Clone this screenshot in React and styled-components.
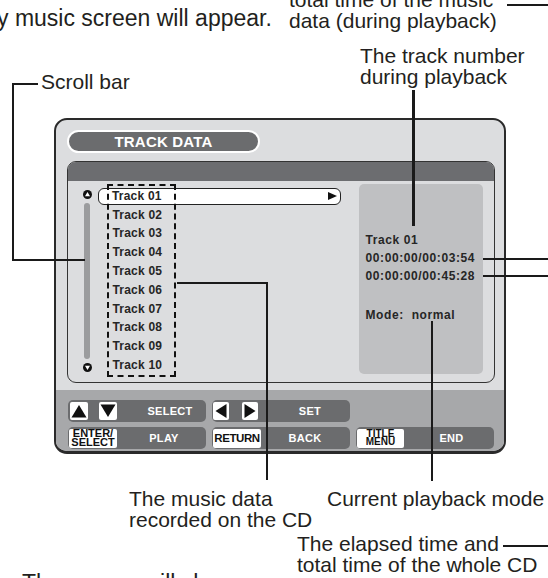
import React from 'react';
import styled, { createGlobalStyle } from 'styled-components';

const GlobalStyle = createGlobalStyle`
  html, body {
    margin: 0;
    padding: 0;
    background: #fff;
  }
  body {
    font-family: "Liberation Sans", Arial, sans-serif;
  }
`;

const Page = styled.div`
  position: relative;
  width: 548px;
  height: 578px;
  box-sizing: border-box;
  padding: 118px 0 0 54px;
  overflow: hidden;
  background: #fff;
`;

// ---- the TV screen ----

const Screen = styled.div`
  width: 452px;
  height: 336px;
  box-sizing: border-box;
  border: 2px solid #2a2a2a;
  border-bottom-width: 3px;
  border-radius: 13px;
  background: #dcdddf;
  overflow: hidden;
  display: flex;
  flex-direction: column;
`;

const ScreenTop = styled.div`
  padding: 10px 9px 0 11px;
`;

const TitlePill = styled.div`
  width: 193px;
  height: 23px;
  box-sizing: border-box;
  border: 2px solid #fff;
  border-radius: 12px;
  background: #6b6c6e;
  color: #fff;
  font: bold 15px/19px "Liberation Sans", Arial, sans-serif;
  letter-spacing: 0.2px;
  text-align: center;
  margin-bottom: 8px;
`;

const ListPanel = styled.div`
  height: 222px;
  box-sizing: border-box;
  border: 1.5px solid #333;
  border-radius: 9px;
  background: #dcdddf;
  overflow: hidden;
  display: flex;
  flex-direction: column;
`;

const PanelHeader = styled.div`
  flex: none;
  height: 18.5px;
  background: #6c6d70;
`;

const PanelBody = styled.div`
  flex: 1;
  display: flex;
  padding: 3px 10px 8.5px 14.5px;
`;

const ScrollCol = styled.div`
  width: 9px;
  display: flex;
  flex-direction: column;
  align-items: center;
  gap: 4px;
  padding: 6px 0 2.5px;
`;

const ScrollTrack = styled.div`
  flex: 1;
  width: 5.5px;
  border-radius: 3px;
  background: #9b9c9e;
`;

const ListCol = styled.div`
  position: relative;
  width: 243px;
  margin-left: 6px;
  padding-top: 3px;
`;

const TrackRow = styled.div`
  display: flex;
  align-items: center;
  box-sizing: border-box;
  height: ${p => (p.$selected ? '17px' : '18.8px')};
  margin: ${p => (p.$selected ? '1px 0 0.8px' : '0')};
  padding: 0 2.5px 0 ${p => (p.$selected ? '13.5px' : '15px')};
  border: ${p => (p.$selected ? '1.5px solid #222' : 'none')};
  border-radius: 6px;
  background: ${p => (p.$selected ? '#fff' : 'transparent')};
  color: #262626;
  font: bold 12px "Liberation Sans", Arial, sans-serif;
  letter-spacing: 0.2px;
`;

const PlayMark = styled.span`
  margin-left: auto;
  width: 0;
  height: 0;
  border-left: 9px solid #111;
  border-top: 4.5px solid transparent;
  border-bottom: 4.5px solid transparent;
`;

const DashedFrame = styled.div`
  position: absolute;
  left: 9px;
  top: 0;
  width: 69px;
  height: 193px;
  box-sizing: border-box;
  border: 2px dashed #111;
  pointer-events: none;
`;

const InfoPanel = styled.div`
  width: 124px;
  margin-left: 18px;
  box-sizing: border-box;
  padding: 47px 0 0 7px;
  border-radius: 5px;
  background: #bfc0c2;
  color: #262626;
  font: bold 12px/18px "Liberation Sans", Arial, sans-serif;
  letter-spacing: 0.6px;
  white-space: pre;
`;

const InfoLine = styled.div`
  margin-top: ${p => p.$gap || 0}px;
`;

// ---- remote control legend ----

const Controls = styled.div`
  flex: 1;
  margin-top: 7px;
  background: #a7a8aa;
  display: flex;
  flex-direction: column;
  gap: 5px;
  padding: 10px 0 0 12px;
`;

const ControlRow = styled.div`
  display: flex;
  gap: 6px;
`;

const KeyGroup = styled.div`
  width: 138px;
  height: 22px;
  box-sizing: border-box;
  padding: 0 ${p => p.$pad ?? 2}px;
  border-radius: 5px;
  background: #6b6c6e;
  display: flex;
  align-items: center;
  gap: ${p => p.$gap ?? 0}px;
`;

const Key = styled.div`
  flex: none;
  width: ${p => p.$w || 18}px;
  height: ${p => p.$h || 18}px;
  border-radius: 2px;
  background: #fff;
  display: flex;
  flex-direction: column;
  align-items: center;
  justify-content: center;
  color: #111;
  font-family: "Liberation Sans", Arial, sans-serif;
  font-weight: bold;
  font-size: ${p => p.$fs || 12}px;
  line-height: ${p => p.$lh || 12}px;
  letter-spacing: ${p => p.$ls ?? 0}px;
  overflow: hidden;
`;

const KeyLabel = styled.div`
  flex: 1;
  padding-left: ${p => p.$shift || 0}px;
  text-align: center;
  color: #fff;
  font: bold 11px "Liberation Sans", Arial, sans-serif;
  letter-spacing: 0.3px;
`;

// ---- callouts around the screen ----

const Note = styled.div`
  position: absolute;
  left: ${p => p.$x}px;
  top: ${p => p.$y}px;
  color: #231f20;
  font-family: "Liberation Sans", Arial, sans-serif;
  font-size: ${p => p.$fs || 21}px;
  line-height: ${p => p.$fs || 21}px;
  white-space: nowrap;
`;

const Leader = styled.div`
  position: absolute;
  left: ${p => p.$x}px;
  top: ${p => p.$y}px;
  width: ${p => p.$w}px;
  height: ${p => p.$h}px;
  background: #1a1a1a;
`;

const ScrollArrow = ({ down }) => (
  <svg width="9" height="9" viewBox="0 0 9 9">
    <circle cx="4.5" cy="4.5" r="4.5" fill="#111" />
    <polygon
      points={down ? '2,2.7 7,2.7 4.5,7' : '4.5,2 7,6.3 2,6.3'}
      fill="#fff"
    />
  </svg>
);

const arrows = {
  up: '9,3 16.5,15.5 1.5,15.5',
  down: '1.5,2.5 16.5,2.5 9,15',
  left: '2.5,9 13.5,2 13.5,16',
  right: '2.5,2 13.5,9 2.5,16',
};

const ArrowKey = ({ dir, w = 18 }) => (
  <Key $w={w}>
    <svg width={w} height="18" viewBox={`0 0 ${w} 18`}>
      <polygon points={arrows[dir]} fill="#111" />
    </svg>
  </Key>
);

const tracks = Array.from({ length: 10 }, (_, i) => `Track ${String(i + 1).padStart(2, '0')}`);

export default function App() {
  return (
    <Page>
      <GlobalStyle />

      <Screen>
        <ScreenTop>
          <TitlePill>TRACK DATA</TitlePill>
          <ListPanel>
            <PanelHeader />
            <PanelBody>
              <ScrollCol>
                <ScrollArrow />
                <ScrollTrack />
                <ScrollArrow down />
              </ScrollCol>
              <ListCol>
                {tracks.map((t, i) => (
                  <TrackRow key={t} $selected={i === 0}>
                    {t}
                    {i === 0 && <PlayMark />}
                  </TrackRow>
                ))}
                <DashedFrame />
              </ListCol>
              <InfoPanel>
                <InfoLine>Track 01</InfoLine>
                <InfoLine>00:00:00/00:03:54</InfoLine>
                <InfoLine>00:00:00/00:45:28</InfoLine>
                <InfoLine $gap={21}>Mode:  normal</InfoLine>
              </InfoPanel>
            </PanelBody>
          </ListPanel>
        </ScreenTop>

        <Controls>
          <ControlRow>
            <KeyGroup $gap={11}>
              <ArrowKey dir="up" />
              <ArrowKey dir="down" />
              <KeyLabel $shift={8}>SELECT</KeyLabel>
            </KeyGroup>
            <KeyGroup $pad={1} $gap={13}>
              <ArrowKey dir="left" w={16} />
              <ArrowKey dir="right" w={16} />
              <KeyLabel>SET</KeyLabel>
            </KeyGroup>
          </ControlRow>
          <ControlRow>
            <KeyGroup $pad={1}>
              <Key $w={48} $h={19} $fs={11} $lh={9} $ls={0}>
                <span>ENTER/</span>
                <span>SELECT</span>
              </Key>
              <KeyLabel $shift={6}>PLAY</KeyLabel>
            </KeyGroup>
            <KeyGroup $pad={1}>
              <Key $w={48} $h={19} $fs={11.5} $ls={-0.4}>
                RETURN
              </Key>
              <KeyLabel>BACK</KeyLabel>
            </KeyGroup>
            <KeyGroup $pad={1}>
              <Key $w={47} $h={19} $fs={10} $lh={8}>
                <span>TITLE</span>
                <span>MENU</span>
              </Key>
              <KeyLabel $shift={6}>END</KeyLabel>
            </KeyGroup>
          </ControlRow>
        </Controls>
      </Screen>

      {/* callout texts */}
      <Note $x={-3} $y={7} $fs={23}>y music screen will appear.</Note>
      <Note $x={289} $y={-11}>
        total time of the music
        <br />
        data (during playback)
      </Note>
      <Note $x={41} $y={71}>Scroll bar</Note>
      <Note $x={360} $y={45}>
        The track number
        <br />
        during playback
      </Note>
      <Note $x={129} $y={488}>
        The music data
        <br />
        recorded on the CD
      </Note>
      <Note $x={327} $y={488}>Current playback mode</Note>
      <Note $x={297} $y={533}>
        The elapsed time and
        <br />
        total time of the whole CD
      </Note>
      <Note $x={22} $y={572} $fs={23}>The screen will change.</Note>

      {/* leader lines */}
      <Leader $x={507} $y={4} $w={41} $h={2} />
      <Leader $x={12} $y={83} $w={26} $h={2} />
      <Leader $x={12} $y={83} $w={2} $h={177} />
      <Leader $x={12} $y={258.5} $w={73} $h={2} />
      <Leader $x={412} $y={90} $w={2.5} $h={136} />
      <Leader $x={483} $y={258} $w={65} $h={2} />
      <Leader $x={483} $y={274.5} $w={65} $h={2} />
      <Leader $x={177} $y={282} $w={90} $h={2} />
      <Leader $x={266} $y={282} $w={2} $h={198} />
      <Leader $x={431} $y={321} $w={2} $h={160} />
      <Leader $x={503} $y={545} $w={45} $h={2} />
    </Page>
  );
}
